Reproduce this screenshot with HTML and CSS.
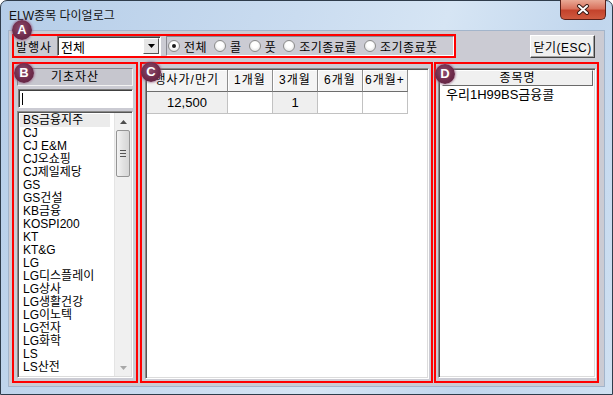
FILE: index.html
```html
<!DOCTYPE html>
<html lang="ko">
<head>
    <meta charset="UTF-8">
    <title>ELW종목 다이얼로그</title>
    <link rel="stylesheet" href="styles.css">
</head>
<body>
    <div class="window">
        <div class="titlebar">
            <span class="title">ELW종목 다이얼로그</span>
            <div class="close-x">
                <svg width="14" height="11" viewBox="0 0 14 11">
                    <path d="M3 2 L11 9 M11 2 L3 9" stroke="#3b1b16" stroke-width="4" stroke-linecap="round"/>
                    <path d="M3 2 L11 9 M11 2 L3 9" stroke="#fff" stroke-width="2" stroke-linecap="round"/>
                </svg>
            </div>
        </div>

        <div class="client">
            <div class="top-row">
                <div class="mark mark-a">
                    <span class="badge badge-a">A</span>
                    <span class="issuer-label">발행사</span>
                    <div class="combo">
                        <span class="combo-text">전체</span>
                        <span class="combo-btn">
                            <svg width="7" height="4" viewBox="0 0 7 4"><path d="M0 0 H7 L3.5 4 Z" fill="#000"/></svg>
                        </span>
                    </div>
                    <div class="radio-group">
                        <label class="radio checked"><span class="radio-dot"></span>전체</label>
                        <label class="radio"><span class="radio-dot"></span>콜</label>
                        <label class="radio"><span class="radio-dot"></span>풋</label>
                        <label class="radio"><span class="radio-dot"></span>조기종료콜</label>
                        <label class="radio"><span class="radio-dot"></span>조기종료풋</label>
                    </div>
                </div>
                <button class="btn-esc">닫기(ESC)</button>
            </div>

            <div class="main-row">
                <!-- 기초자산 -->
                <div class="mark mark-b">
                    <span class="badge badge-b">B</span>
                    <div class="panel-title">기초자산</div>
                    <div class="search"><span class="caret"></span></div>
                    <div class="listbox">
                        <ul class="items">
                            <li class="current">BS금융지주</li>
                            <li>CJ</li>
                            <li>CJ E&amp;M</li>
                            <li>CJ오쇼핑</li>
                            <li>CJ제일제당</li>
                            <li>GS</li>
                            <li>GS건설</li>
                            <li>KB금융</li>
                            <li>KOSPI200</li>
                            <li>KT</li>
                            <li>KT&amp;G</li>
                            <li>LG</li>
                            <li>LG디스플레이</li>
                            <li>LG상사</li>
                            <li>LG생활건강</li>
                            <li>LG이노텍</li>
                            <li>LG전자</li>
                            <li>LG화학</li>
                            <li>LS</li>
                            <li>LS산전</li>
                        </ul>
                        <div class="scrollbar">
                            <div class="sb-btn">
                                <svg width="7" height="4" viewBox="0 0 7 4"><path d="M0 4 H7 L3.5 0 Z" fill="#4d4d4d"/></svg>
                            </div>
                            <div class="sb-track">
                                <div class="sb-thumb"><span class="grip"></span></div>
                            </div>
                            <div class="sb-btn">
                                <svg width="7" height="4" viewBox="0 0 7 4"><path d="M0 0 H7 L3.5 4 Z" fill="#a8a8a8"/></svg>
                            </div>
                        </div>
                    </div>
                </div>

                <!-- 행사가/만기 -->
                <div class="mark mark-c">
                    <span class="badge badge-c">C</span>
                    <div class="grid-box">
                        <div class="grid">
                            <div class="gh gh-first">행사가/만기</div>
                            <div class="gh">1개월</div>
                            <div class="gh">3개월</div>
                            <div class="gh">6개월</div>
                            <div class="gh">6개월+</div>
                            <div class="gd shade">12,500</div>
                            <div class="gd"></div>
                            <div class="gd shade">1</div>
                            <div class="gd"></div>
                            <div class="gd"></div>
                        </div>
                    </div>
                </div>

                <!-- 종목명 -->
                <div class="mark mark-d">
                    <span class="badge badge-d">D</span>
                    <div class="name-list">
                        <div class="name-head">종목명</div>
                        <div class="name-item">우리1H99BS금융콜</div>
                    </div>
                </div>
            </div>
        </div>
    </div>
</body>
</html>
```

FILE: styles.css
```css
* {
    box-sizing: border-box;
}

body {
    margin: 0;
    font-family: "Liberation Sans", "Noto Sans CJK KR", sans-serif;
    font-size: 12px;
    color: #000;
    background: #fff;
}

.window {
    width: 613px;
    height: 395px;
    border: 1px solid #2f3c4b;
    border-radius: 7px 7px 0 0;
    padding: 0 7px 7px;
    display: flex;
    flex-direction: column;
    background: linear-gradient(110deg, #b5cde8 0%, #cadcf0 40%, #d6e5f4 60%, #c1d6ed 80%, #d0e1f2 100%);
}

.titlebar {
    height: 29px;
    display: flex;
    align-items: flex-start;
}

.title {
    margin-top: 8px;
    padding-left: 1px;
    line-height: 14px;
    color: #111;
}

.close-x {
    margin-left: auto;
    margin-top: -1px;
    margin-right: -1px;
    width: 46px;
    height: 20px;
    border: 1px solid #5a1f18;
    border-top: none;
    border-radius: 0 0 5px 5px;
    background: linear-gradient(#e9a996 0%, #d9735e 45%, #c4432c 55%, #cf5a3f 100%);
    display: flex;
    justify-content: center;
    align-items: center;
}

.client {
    height: 357px;
    border: 1px solid #a3b5cb;
    background: #cbcbd3;
    padding: 3px 5px 3px 3px;
    display: flex;
    flex-direction: column;
    gap: 4px;
}

.mark {
    position: relative;
    border: 2px solid #ff0000;
}

.badge {
    position: absolute;
    width: 20px;
    height: 20px;
    border-radius: 50%;
    background: radial-gradient(circle at 45% 40%, #8e4c6c 0%, #6e2b4b 55%, #5b1f3d 100%);
    box-shadow: 0 0 2px 1px rgba(150, 90, 130, 0.55);
    color: #fff;
    font-weight: bold;
    font-size: 13px;
    line-height: 20px;
    text-align: center;
    z-index: 2;
}

.badge-a { left: -2px; top: -16px; }
.badge-b { left: 0; top: -1px; }
.badge-c { left: -1px; top: -2px; }
.badge-d { left: -1px; top: 0; }

/* top row */
.top-row {
    height: 24px;
    display: flex;
    justify-content: space-between;
    align-items: flex-start;
}

.mark-a {
    width: 444px;
    height: 24px;
    display: flex;
    align-items: center;
}

.issuer-label {
    flex-shrink: 0;
    width: 43px;
    padding-left: 2px;
    white-space: nowrap;
    letter-spacing: 1px;
}

.combo {
    flex-shrink: 0;
    width: 104px;
    height: 20px;
    margin-right: 5px;
    background: #fff;
    border: 1px solid;
    border-color: #7c7c7c #fff #fff #7c7c7c;
    box-shadow: inset 1px 1px 0 #404040;
    display: flex;
    align-items: center;
    justify-content: space-between;
}

.combo-text {
    padding-left: 3px;
    font-size: 13px;
}

.combo-btn {
    width: 16px;
    height: 16px;
    margin-right: 1px;
    background: #e6e6e6;
    border: 1px solid;
    border-color: #fff #555 #555 #fff;
    display: flex;
    justify-content: center;
    align-items: center;
}

.radio-group {
    flex: 1;
    min-width: 0;
    height: 20px;
    border: 1px solid;
    border-color: #8a8a92 #fff #fff #8a8a92;
    padding-left: 1px;
    display: flex;
    align-items: center;
}

.radio {
    flex-shrink: 0;
    display: flex;
    align-items: center;
    gap: 4px;
    margin-right: 7px;
    white-space: nowrap;
    letter-spacing: 0.5px;
}

.radio-dot {
    width: 12px;
    height: 12px;
    border-radius: 50%;
    border: 1px solid #8b8b8b;
    background: radial-gradient(circle at 50% 40%, #fff 35%, #d8d8d8 100%);
    display: flex;
    justify-content: center;
    align-items: center;
}

.radio.checked .radio-dot::after {
    content: "";
    width: 4px;
    height: 4px;
    border-radius: 50%;
    background: #1a1a1a;
}

.btn-esc {
    width: 65px;
    height: 23px;
    margin-top: 1px;
    margin-right: 4px;
    padding: 0;
    font-family: inherit;
    font-size: 12px;
    letter-spacing: 0.5px;
    background: #f0f0f0;
    border: 1px solid;
    border-color: #fff #404040 #404040 #fff;
    box-shadow: inset -1px -1px 0 #a0a0a0;
}

/* main row */
.main-row {
    height: 321px;
    display: flex;
}

.mark-b {
    width: 126px;
    padding: 4px 3px 3px;
    display: flex;
    flex-direction: column;
}

.panel-title {
    height: 18px;
    line-height: 16px;
    text-align: center;
    letter-spacing: 1px;
    background: #c6c6ce;
    border: 1px solid;
    border-color: #85858d #f2f2f2 #f2f2f2 #85858d;
}

.search {
    height: 19px;
    margin-top: 3px;
    margin-left: 1px;
    background: #fff;
    border: 1px solid;
    border-color: #7c7c7c #fff #fff #7c7c7c;
    box-shadow: inset 1px 1px 0 #404040;
    padding: 3px 0 0 3px;
}

.caret {
    display: block;
    width: 1px;
    height: 12px;
    background: #000;
}

.listbox {
    flex: 1;
    margin-top: 3px;
    background: #fff;
    border: 1px solid;
    border-color: #8a8a8a #fff #fff #8a8a8a;
    box-shadow: inset 1px 1px 0 #555, inset -1px -1px 0 #dcdcdc;
    padding: 1px;
    display: flex;
    overflow: hidden;
}

.items {
    flex: 1;
    margin: 0;
    padding: 1px 0 0;
    list-style: none;
    overflow: hidden;
}

.items li {
    margin-left: 1px;
    margin-right: 4px;
    padding-left: 3px;
    height: 13px;
    line-height: 13px;
    white-space: nowrap;
}

.items li.current {
    background: #ebebeb;
}

.scrollbar {
    width: 17px;
    background: #f0f0f0;
    border-left: 1px solid #e4e4e4;
    display: flex;
    flex-direction: column;
}

.sb-btn {
    height: 17px;
    display: flex;
    justify-content: center;
    align-items: center;
}

.sb-track {
    flex: 1;
}

.sb-thumb {
    width: 14px;
    height: 47px;
    margin-left: 1px;
    border: 1px solid #959595;
    border-radius: 2px;
    background: linear-gradient(90deg, #f3f3f3, #e2e2e2 50%, #d6d6d6);
    display: flex;
    justify-content: center;
    align-items: center;
}

.grip {
    width: 6px;
    height: 7px;
    background: repeating-linear-gradient(#555 0 1px, transparent 1px 3px);
}

.mark-c {
    width: 293px;
    margin-left: 2px;
    padding: 4px 2px 2px 3px;
    display: flex;
}

.grid-box {
    flex: 1;
    background: #fff;
    border: 1px solid;
    border-color: #8a8a8a #fff #fff #8a8a8a;
    box-shadow: inset 1px 1px 0 #555, inset -1px -1px 0 #dcdcdc;
    padding: 1px;
}

.grid {
    display: grid;
    grid-template-columns: 81px 45px 45px 45px 45px;
    grid-auto-rows: 22px;
}

.gh {
    background: #f4f4f4;
    border-right: 1px solid #8e8e8e;
    border-bottom: 1px solid #6e6e6e;
    box-shadow: inset 1px 1px 0 #fff;
    line-height: 21px;
    white-space: nowrap;
    overflow: hidden;
    letter-spacing: 1px;
    display: flex;
    justify-content: center;
}

.gh-first {
    justify-content: flex-end;
    padding-right: 8px;
}

.gd {
    border-right: 1px solid #c2c2c2;
    border-bottom: 1px solid #c2c2c2;
    line-height: 21px;
    text-align: center;
    font-size: 13px;
}

.gd.shade {
    background: #efefef;
}

.mark-d {
    width: 165px;
    margin-left: 1px;
    padding: 4px 1px 3px 2px;
    display: flex;
}

.name-list {
    flex: 1;
    background: #fff;
    border: 1px solid;
    border-color: #8a8a8a #fff #fff #8a8a8a;
    box-shadow: inset 1px 1px 0 #555, inset -1px -1px 0 #dcdcdc;
    padding: 1px 2px 1px 2px;
}

.name-head {
    height: 16px;
    margin-left: 1px;
    line-height: 14px;
    text-align: center;
    letter-spacing: 1px;
    background: #f0f0f0;
    border: 1px solid;
    border-color: #fff #6a6a6a #6a6a6a #fff;
}

.name-item {
    padding-left: 5px;
    margin-top: 2px;
    line-height: 14px;
    font-size: 13px;
    white-space: nowrap;
}
```
